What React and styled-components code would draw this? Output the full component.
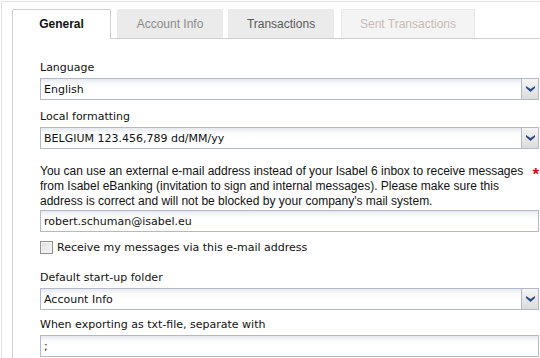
import React from "react";
import styled, { createGlobalStyle } from "styled-components";

const Global = createGlobalStyle`
  html, body { margin: 0; padding: 0; background: #fff; }
  body { width: 540px; height: 358px; overflow: hidden; }
`;

const Frame = styled.div`
  box-sizing: border-box;
  height: 358px;
  border-top: 1px solid #e2e2e2;
  border-left: 1px solid #e2e2e2;
  margin: 1px 0 0 1px;
  padding: 7px 0 0 10px;
`;

const TabBar = styled.div`
  display: flex;
  align-items: flex-end;
  height: 29px;
  border-bottom: 1px solid #cfcfcf;
`;

const Tab = styled.div`
  box-sizing: border-box;
  width: ${(p) => p.$w}px;
  margin-right: ${(p) => p.$gap}px;
  height: ${(p) => (p.$active ? 30 : 29)}px;
  margin-bottom: ${(p) => (p.$active ? -1 : 0)}px;
  display: flex;
  align-items: center;
  justify-content: center;
  font-family: "Liberation Sans", Arial, sans-serif;
  font-size: 12px;
  font-weight: ${(p) => (p.$active ? 700 : 400)};
  color: ${(p) => p.$color};
  background: ${(p) => p.$bg};
  border: 1px solid ${(p) => p.$border};
  border-bottom: 0;
  border-radius: 2px 2px 0 0;
  padding-bottom: ${(p) => (p.$active ? 1 : 0)}px;
`;

const Panel = styled.div`
  border-left: 1px solid #cfcfcf;
  padding: 21px 1px 0 27px;
  height: 320px;
  box-sizing: border-box;
`;

const Label = styled.div`
  font-family: "DejaVu Sans", Tahoma, sans-serif;
  font-size: 11px;
  line-height: 15px;
  color: #111;
  margin-bottom: 3px;
`;

const Field = styled.div`
  margin-bottom: ${(p) => p.$mb}px;
`;

const Box = styled.div`
  box-sizing: border-box;
  height: 22px;
  display: flex;
  align-items: stretch;
  border: 1px solid #b5b8c8;
  background: linear-gradient(to bottom, #e6e9ee 0px, #fafbfc 5px, #ffffff 10px);
`;

const Value = styled.div`
  flex: 1;
  display: flex;
  align-items: center;
  padding-left: 3px;
  font-family: "DejaVu Sans", Tahoma, sans-serif;
  font-size: 11px;
  color: #111;
  white-space: nowrap;
  overflow: hidden;
`;

const ArrowButton = styled.div`
  width: 16px;
  border-left: 1px solid #b5b8c8;
  background: linear-gradient(to bottom, #f4f4f4, #dcdcdc);
  display: flex;
  align-items: center;
  justify-content: center;
`;

const InfoRow = styled.div`
  display: flex;
  align-items: flex-start;
  margin-bottom: 1px;
`;

const Info = styled.p`
  margin: 0;
  flex: 1;
  font-family: "Liberation Sans", Arial, sans-serif;
  font-size: 12px;
  line-height: 15px;
  color: #111;
`;

const Star = styled.span`
  font-family: "Liberation Sans", Arial, sans-serif;
  font-size: 17px;
  font-weight: 700;
  line-height: 15px;
  color: #c4141c;
  margin: 3px 0 0 0;
`;

const CheckRow = styled.label`
  display: flex;
  align-items: center;
  gap: 4px;
  height: 15px;
  margin-bottom: 15px;
  font-family: "DejaVu Sans", Tahoma, sans-serif;
  font-size: 11px;
  color: #111;
`;

const CheckBox = styled.span`
  box-sizing: border-box;
  width: 13px;
  height: 13px;
  border: 1px solid #8e8f8f;
  background: linear-gradient(135deg, #dcdcdc, #f8f8f8);
  box-shadow: inset 0 0 0 1px #f4f4f4;
`;

const Chevron = () => (
  <svg width="9" height="6" viewBox="0 0 9 6">
    <path d="M0 0 L4.5 3 L9 0 L9 2 L4.5 6 L0 2 Z" fill="#2a4a86" />
  </svg>
);

const Select = ({ value }) => (
  <Box>
    <Value>{value}</Value>
    <ArrowButton>
      <Chevron />
    </ArrowButton>
  </Box>
);

const Input = ({ value }) => (
  <Box>
    <Value>{value}</Value>
  </Box>
);

const tabs = [
  { label: "General", w: 99, gap: 6, active: true, color: "#111", bg: "#fff", border: "#cfcfcf" },
  { label: "Account Info", w: 106, gap: 5, color: "#8a8a8a", bg: "#ebebeb", border: "#ebebeb" },
  { label: "Transactions", w: 106, gap: 7, color: "#5a5a5a", bg: "#ebebeb", border: "#ebebeb" },
  { label: "Sent Transactions", w: 134, gap: 0, color: "#c9b9b9", bg: "#f4f4f4", border: "#e6e6e6" },
];

export default function App() {
  return (
    <>
      <Global />
      <Frame>
        <TabBar>
          {tabs.map((t) => (
            <Tab key={t.label} $w={t.w} $gap={t.gap} $active={t.active} $color={t.color} $bg={t.bg} $border={t.border}>
              {t.label}
            </Tab>
          ))}
        </TabBar>
        <Panel>
          <Field $mb={9}>
            <Label>Language</Label>
            <Select value="English" />
          </Field>
          <Field $mb={15}>
            <Label>Local formatting</Label>
            <Select value="BELGIUM 123.456,789 dd/MM/yy" />
          </Field>
          <InfoRow>
            <Info>
              You can use an external e-mail address instead of your Isabel 6 inbox to receive messages
              <br />
              from Isabel eBanking (invitation to sign and internal messages). Please make sure this
              <br />
              address is correct and will not be blocked by your company's mail system.
            </Info>
            <Star>*</Star>
          </InfoRow>
          <Field $mb={8}>
            <Input value="robert.schuman@isabel.eu" />
          </Field>
          <CheckRow>
            <CheckBox />
            Receive my messages via this e-mail address
          </CheckRow>
          <Field $mb={7}>
            <Label>Default start-up folder</Label>
            <Select value="Account Info" />
          </Field>
          <Field $mb={0}>
            <Label>When exporting as txt-file, separate with</Label>
            <Input value=";" />
          </Field>
        </Panel>
      </Frame>
    </>
  );
}
